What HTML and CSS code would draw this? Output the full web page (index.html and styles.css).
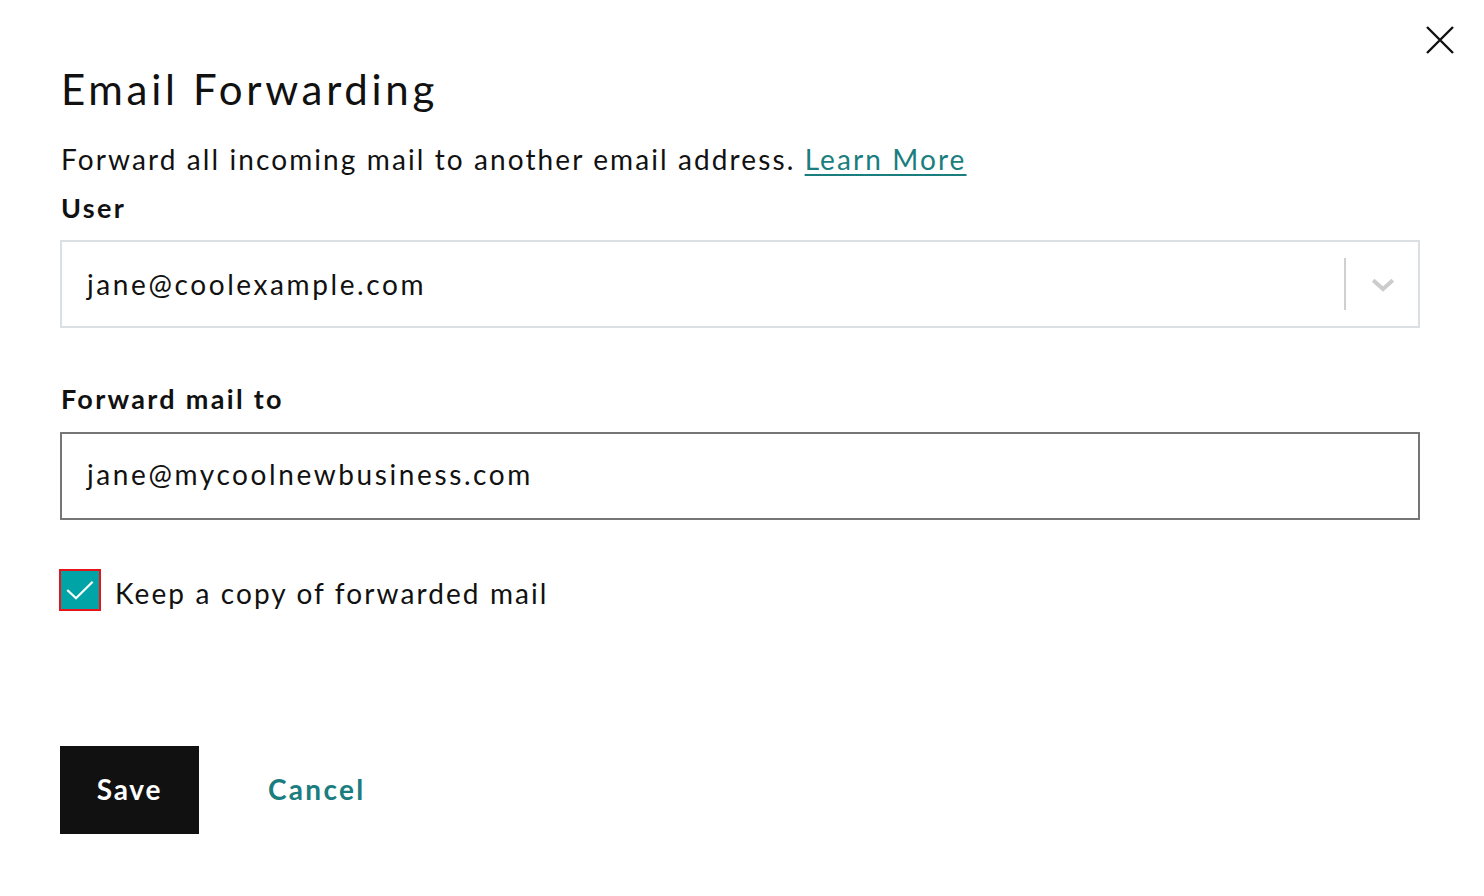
FILE: index.html
```html
<!DOCTYPE html>
<html lang="en">
<head>
<meta charset="utf-8">
<title>Email Forwarding</title>
<link rel="stylesheet" href="styles.css">
</head>
<body>
<div class="dialog">
  <button class="close" aria-label="Close">
    <svg width="28" height="28" viewBox="0 0 28 28"><path d="M1 1 L27 27 M27 1 L1 27" stroke="#111" stroke-width="2.4" fill="none"/></svg>
  </button>
  <h1 class="title">Email Forwarding</h1>
  <p class="desc">Forward all incoming mail to another email address. <a href="#" class="link">Learn More</a></p>
  <label class="label label-user">User</label>
  <div class="select">
    <span class="value">jane@coolexample.com</span>
    <span class="divider"></span>
    <svg class="chev" width="24" height="14" viewBox="0 0 24 14"><path d="M2.2 2.2 L12 11 L21.8 2.2" stroke="#cccccc" stroke-width="4" fill="none"/></svg>
  </div>
  <label class="label label-fwd">Forward mail to</label>
  <div class="input">
    <span class="value">jane@mycoolnewbusiness.com</span>
  </div>
  <div class="check-row">
    <span class="checkbox">
      <svg width="38" height="38" viewBox="0 0 38 38"><path d="M6.3 19 L15 27.3 L31.7 10.7" stroke="#fff" stroke-width="2.2" fill="none"/></svg>
    </span>
    <span class="check-label">Keep a copy of forwarded mail</span>
  </div>
  <div class="actions">
    <button class="btn-save">Save</button>
    <button class="btn-cancel">Cancel</button>
  </div>
</div>
</body>
</html>
```
FILE: styles.css
```css
html, body {
  margin: 0;
  padding: 0;
  background: #fff;
}
body {
  font-family: "Lato", "Noto Sans", sans-serif;
  color: #111;
}
.dialog {
  position: relative;
  width: 1484px;
  height: 896px;
  box-sizing: border-box;
  padding: 64px 64px 0 60px;
  display: flex;
  flex-direction: column;
  align-items: flex-start;
}
.close {
  position: absolute;
  top: 26px;
  left: 1426px;
  border: 0;
  background: none;
  padding: 0;
  width: 28px;
  height: 28px;
  cursor: pointer;
}
.close svg { display: block; }
.title {
  margin: 0 0 0 1px;
  font-size: 42px;
  line-height: 50px;
  font-weight: 400;
  letter-spacing: 3.7px;
}
.desc {
  margin: 27px 0 0 1px;
  font-size: 28px;
  line-height: 36px;
  letter-spacing: 2.1px;
}
.link {
  color: #1a7d7e;
  text-decoration: underline;
  text-underline-offset: 4px;
  text-decoration-thickness: 2px;
}
.label {
  display: block;
  font-size: 27px;
  line-height: 34px;
  font-weight: 700;
  margin-left: 1px;
  letter-spacing: 2.3px;
}
.label-user { margin-top: 14px; }
.label-fwd { margin-top: 54px; }
.select, .input {
  box-sizing: border-box;
  width: 1360px;
  height: 88px;
  display: flex;
  align-items: center;
  padding-left: 25px;
  font-size: 28px;
  letter-spacing: 2.6px;
}
.select {
  margin-top: 15px;
  border: 2px solid #d9dfe3;
}
.input {
  margin-top: 16px;
  border: 2px solid #767676;
  padding-bottom: 4px;
}
.value { flex: 1; }
.divider {
  width: 2px;
  height: 52px;
  margin-right: 25px;
  background: #d0d0d0;
}
.chev {
  display: block;
  margin: 2px 23px 0 0;
}
.check-row {
  margin-top: 49px;
  display: flex;
  align-items: center;
  gap: 14px;
}
.checkbox {
  box-sizing: border-box;
  width: 42px;
  height: 42px;
  border: 2px solid #e8141a;
  background: #00a4a6;
  display: flex;
  align-items: center;
  justify-content: center;
  margin-left: -1px;
}
.checkbox svg { display: block; }
.check-label {
  font-size: 28px;
  line-height: 36px;
  padding-top: 6px;
  letter-spacing: 2.1px;
}
.actions {
  margin-top: 135px;
  display: flex;
  align-items: center;
  gap: 69px;
}
.btn-save {
  width: 139px;
  height: 88px;
  border: 0;
  background: #111;
  color: #fff;
  font-family: inherit;
  font-size: 28px;
  font-weight: 700;
  letter-spacing: 1.8px;
  padding: 0 0 2px;
  cursor: pointer;
}
.btn-cancel {
  border: 0;
  background: none;
  padding: 0 0 2px;
  color: #1a7d7e;
  font-family: inherit;
  font-size: 28px;
  font-weight: 700;
  letter-spacing: 2.3px;
  cursor: pointer;
}
```
